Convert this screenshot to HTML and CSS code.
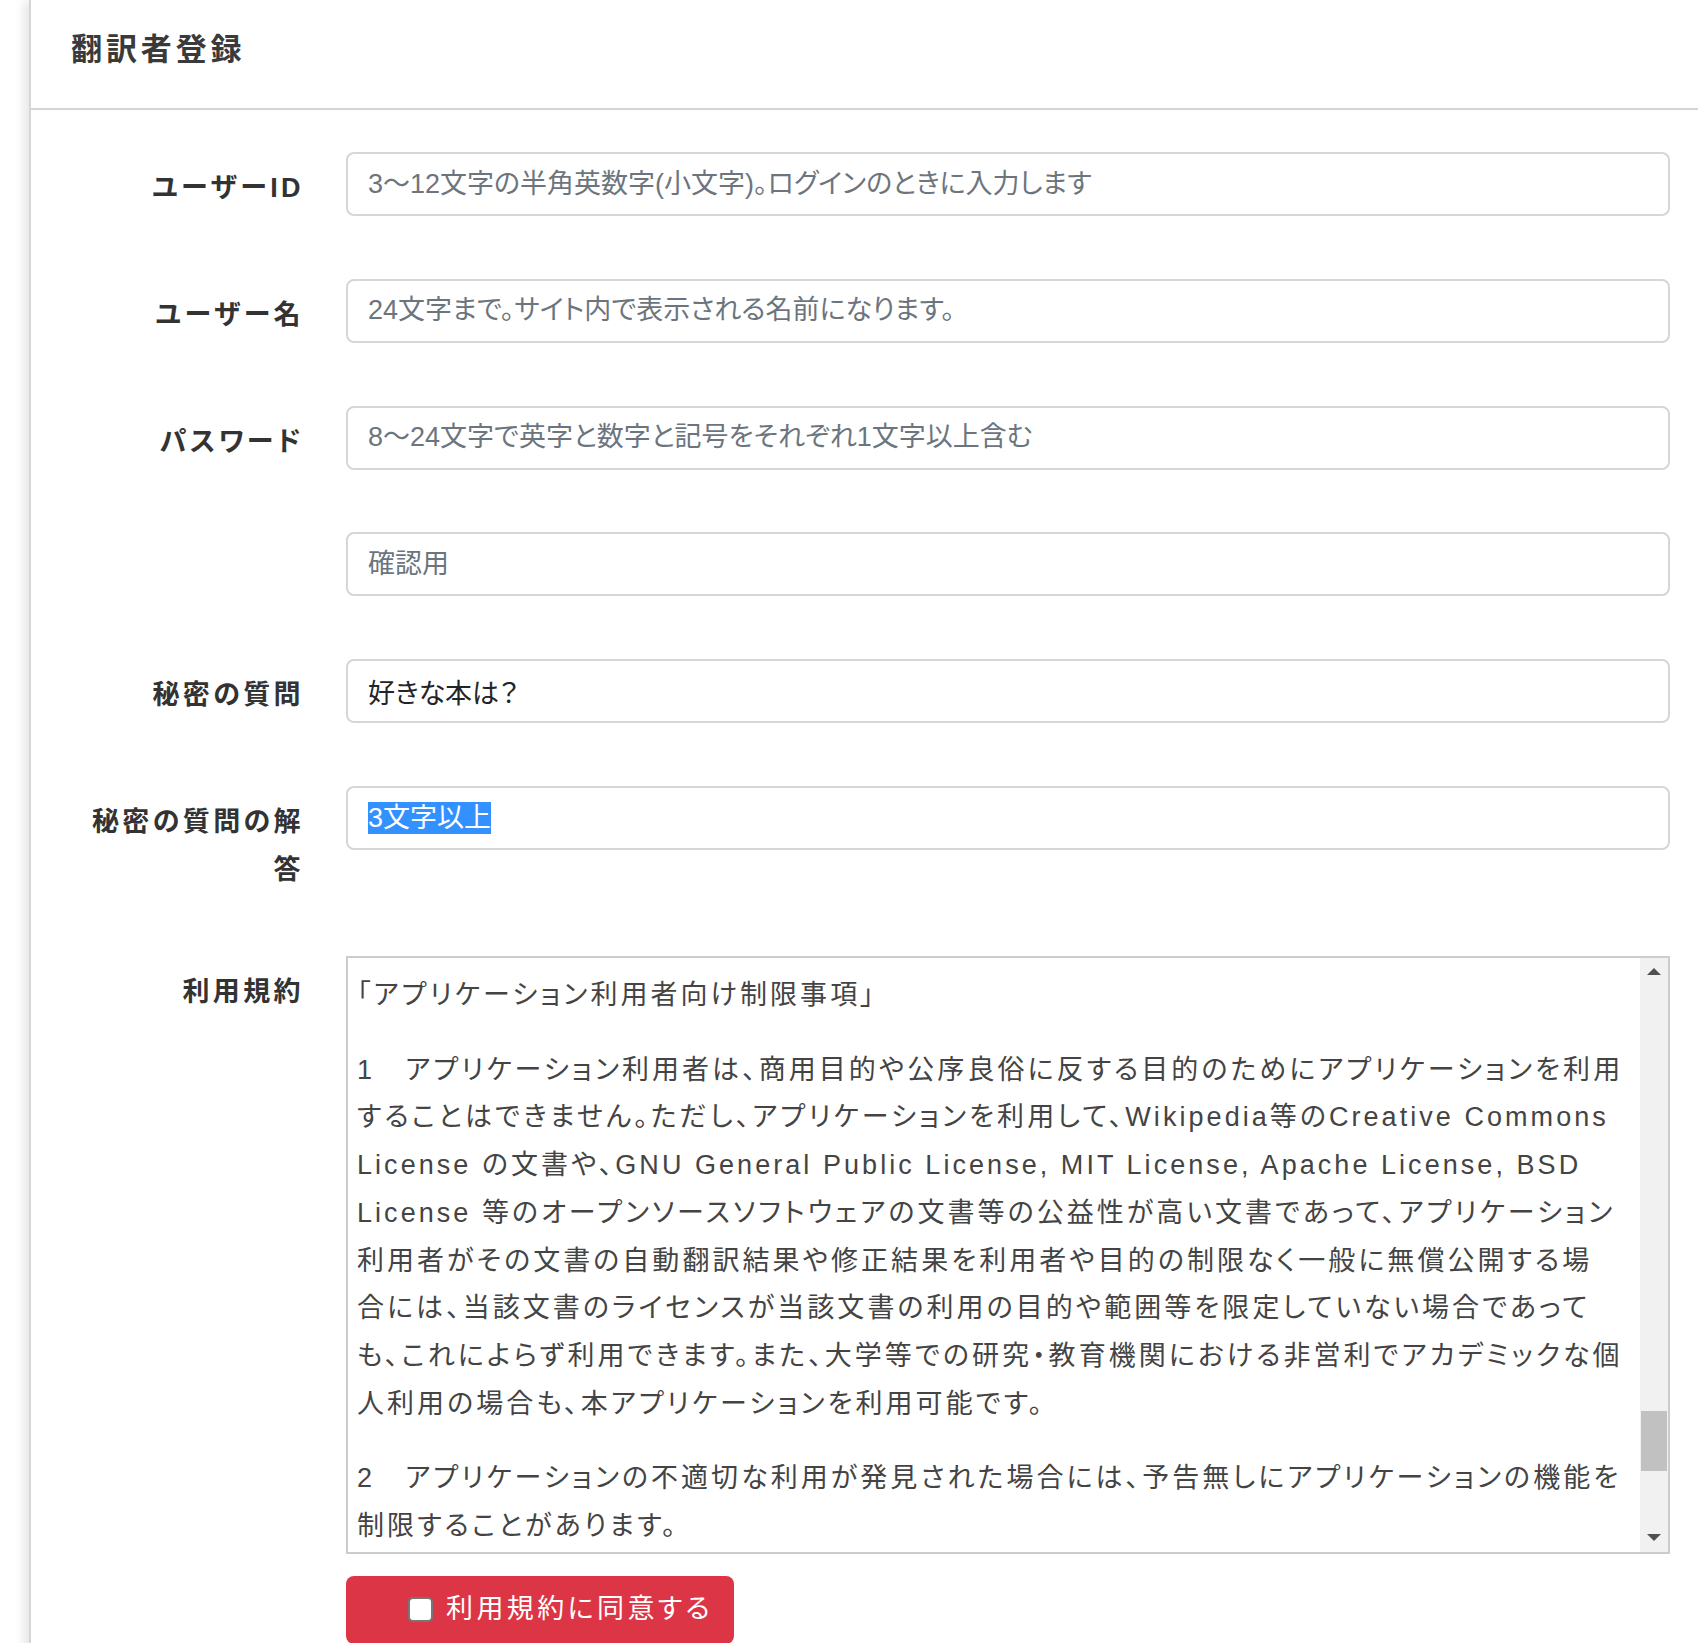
FILE: index.html
```html
<!DOCTYPE html>
<html lang="ja">
<head>
<meta charset="utf-8">
<title>翻訳者登録</title>
<link rel="stylesheet" href="styles.css">
</head>
<body>
<div class="card">
  <div class="card-header">
    <h1 class="title">翻訳者登録</h1>
  </div>
  <div class="card-body">
    <form class="form">
      <div class="row">
        <label class="lbl">ユーザーID</label>
        <div class="ctl"><input class="field" type="text" placeholder="3～12文字の半角英数字(小文字)。ログインのときに入力します"></div>
      </div>
      <div class="row">
        <label class="lbl">ユーザー名</label>
        <div class="ctl"><input class="field" type="text" placeholder="24文字まで。サイト内で表示される名前になります。"></div>
      </div>
      <div class="row">
        <label class="lbl">パスワード</label>
        <div class="ctl"><input class="field" type="password" placeholder="8～24文字で英字と数字と記号をそれぞれ1文字以上含む"></div>
      </div>
      <div class="row">
        <label class="lbl"></label>
        <div class="ctl"><input class="field" type="password" placeholder="確認用"></div>
      </div>
      <div class="row">
        <label class="lbl">秘密の質問</label>
        <div class="ctl"><input class="field" type="text" value="好きな本は？"></div>
      </div>
      <div class="row row-answer">
        <label class="lbl">秘密の質問の解答</label>
        <div class="ctl"><div class="field field-div"><span class="sel">3文字以上</span></div></div>
      </div>
      <div class="row row-terms">
        <label class="lbl">利用規約</label>
        <div class="ctl">
          <div class="terms">
            <div class="terms-text">
              <p>「アプリケーション利用者向け制限事項」</p>
              <p>1　アプリケーション利用者は、商用目的や公序良俗に反する目的のためにアプリケーションを利用することはできません。ただし、アプリケーションを利用して、Wikipedia等のCreative Commons License の文書や、GNU General Public License, MIT License, Apache License, BSD License 等のオープンソースソフトウェアの文書等の公益性が高い文書であって、アプリケーション利用者がその文書の自動翻訳結果や修正結果を利用者や目的の制限なく一般に無償公開する場<br>合には、当該文書のライセンスが当該文書の利用の目的や範囲等を限定していない場合であって<br>も、これによらず利用できます。また、大学等での研究・教育機関における非営利でアカデミックな個<br>人利用の場合も、本アプリケーションを利用可能です。</p>
              <p>2　アプリケーションの不適切な利用が発見された場合には、予告無しにアプリケーションの機能を制限することがあります。</p>
            </div>
            <div class="sbar">
              <div class="sbtn"><span class="arrow-up"></span></div>
              <div class="strack"><div class="sthumb"></div></div>
              <div class="sbtn"><span class="arrow-down"></span></div>
            </div>
          </div>
          <button type="button" class="agree"><span class="chk"></span><span class="agree-text">利用規約に同意する</span></button>
        </div>
      </div>
    </form>
  </div>
</div>
</body>
</html>
```
FILE: styles.css
```css
html, body {
  margin: 0;
  padding: 0;
  overflow: hidden;
  background: #ffffff;
}

body {
  font-family: "Liberation Sans", "Noto Sans CJK JP", sans-serif;
  font-feature-settings: "palt";
  color: #333333;
}

.card {
  margin-left: 29px;
  min-height: 1700px;
  border-left: 2px solid #d6d6d6;
  box-shadow: -5px 0 10px rgba(0, 0, 0, 0.10);
  background: #ffffff;
}

.card-header {
  padding: 29px 40px 38px 40px;
  border-bottom: 2px solid #d4d4d4;
}

.title {
  margin: 0;
  font-size: 31px;
  line-height: 41px;
  font-weight: bold;
  letter-spacing: 3.9px;
  color: #3a3a3a;
}

.card-body {
  padding: 42px 28px 0 55px;
}

.form {
  margin: 0;
}

.row {
  display: grid;
  grid-template-columns: 218px 1fr;
  column-gap: 42px;
  margin-bottom: 62.8px;
  align-items: start;
}

.lbl {
  display: block;
  padding-top: 12px;
  font-size: 27px;
  line-height: 48px;
  font-weight: bold;
  letter-spacing: 3.4px;
  text-align: right;
  color: #333333;
}

.row-answer {
  margin-bottom: 62px;
}

.ctl {
  min-width: 0;
}

.field {
  display: block;
  box-sizing: border-box;
  width: 100%;
  height: 64px;
  margin: 0;
  padding: 0 20px;
  border: 2px solid #d2d7dc;
  border-radius: 8px;
  background: #ffffff;
  font-family: "Liberation Sans", "Noto Sans CJK JP", sans-serif;
  font-feature-settings: "palt";
  font-size: 27px;
  color: #212529;
  outline: none;
}

.field::placeholder {
  color: #6c757d;
  opacity: 1;
}

.field-div {
  display: flex;
  align-items: center;
}

.sel {
  background: #3390ff;
  color: #ffffff;
  line-height: 32px;
}

.terms {
  display: flex;
  height: 598px;
  box-sizing: border-box;
  border: 2px solid #cccccc;
  background: #ffffff;
}

.terms-text {
  flex: 1;
  min-width: 0;
  overflow: hidden;
  padding: 14px 5px 0 9px;
  font-size: 27px;
  line-height: 47.7px;
  letter-spacing: 3.05px;
  color: #444444;
}

.terms-text p {
  margin: 0 0 27px 0;
}

.sbar {
  width: 28px;
  flex: none;
  display: flex;
  flex-direction: column;
  background: #f1f1f1;
}

.sbtn {
  height: 28px;
  display: flex;
  align-items: center;
  justify-content: center;
}

.arrow-up {
  width: 0;
  height: 0;
  border-left: 7.5px solid transparent;
  border-right: 7.5px solid transparent;
  border-bottom: 7px solid #505050;
}

.arrow-down {
  width: 0;
  height: 0;
  border-left: 7.5px solid transparent;
  border-right: 7.5px solid transparent;
  border-top: 7px solid #505050;
}

.strack {
  flex: 1;
}

.sthumb {
  margin: 425px 1px 0 1px;
  height: 60px;
  background: #c1c1c1;
}

.agree {
  display: flex;
  align-items: center;
  box-sizing: border-box;
  width: 388px;
  height: 68px;
  margin-top: 22px;
  padding: 0 0 0 62px;
  border: none;
  border-radius: 8px;
  background: #dc3545;
  color: #ffffff;
  font-family: "Liberation Sans", "Noto Sans CJK JP", sans-serif;
  font-feature-settings: "palt";
  font-size: 27px;
  letter-spacing: 3.4px;
  cursor: pointer;
}

.chk {
  display: inline-block;
  flex: none;
  box-sizing: border-box;
  width: 25px;
  height: 25px;
  margin-right: 13px;
  border: 2px solid #767676;
  border-radius: 5px;
  background: #ffffff;
}

.agree-text {
  line-height: 1;
}
```
